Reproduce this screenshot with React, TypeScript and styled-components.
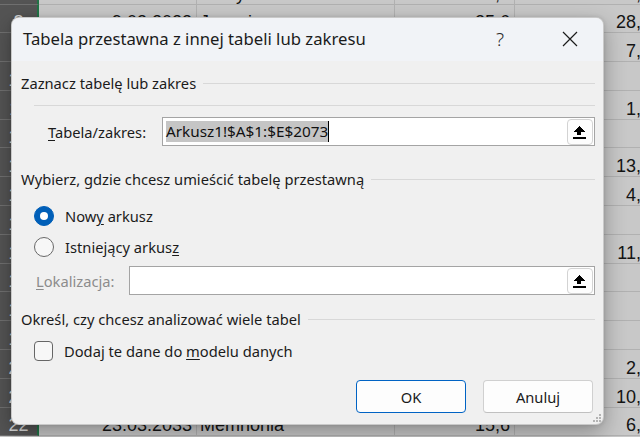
import React from "react";
import styled, { createGlobalStyle } from "styled-components";

const Global = createGlobalStyle`
  html, body { margin: 0; padding: 0; background: #c8c8c8; }
  body { font-family: "Noto Sans", "Liberation Sans", sans-serif; }
`;

const Page = styled.div`
  position: relative;
  width: 640px;
  height: 437px;
  overflow: hidden;
  background: #c8c8c8;
`;

/* ---------- spreadsheet behind the dialog ---------- */
const Sheet = styled.div`
  display: flex;
  flex-direction: column;
  width: 656px;
  margin-top: -24.3px;
`;

const SheetRow = styled.div`
  display: grid;
  grid-template-columns: 39px 158px 198px 120px 141px;
  height: 28.8px;
`;

const Cell = styled.div<{ $align?: "left" | "right" }>`
  box-sizing: border-box;
  display: flex;
  align-items: flex-end;
  justify-content: ${(p) => (p.$align === "left" ? "flex-start" : "flex-end")};
  padding: 0 ${(p) => (p.$align === "left" ? "0 0 3px" : "4px 0 0")};
  border-right: 1px solid #b1b1b1;
  border-bottom: 1px solid #b1b1b1;
  font-family: "Liberation Sans", Arial, sans-serif;
  font-size: 18px;
  line-height: 20px;
  color: #141414;
  white-space: nowrap;
  overflow: hidden;
`;

const HeadCell = styled.div`
  box-sizing: border-box;
  display: flex;
  align-items: flex-end;
  justify-content: center;
  background: #545454;
  border-right: 2px solid #217346;
  border-bottom: 1px solid #707070;
  font-family: "Liberation Sans", Arial, sans-serif;
  font-size: 18px;
  line-height: 20px;
  color: #d6d6d6;
`;

type RowData = { n: number; b?: string; c?: string; d?: string; e?: string };
const rows: RowData[] = [
  { n: 7, b: "8.03.2023", c: "Zefiryna", d: "12,1", e: "3,5" },
  { n: 8, b: "9.03.2023", c: "Jagusia", d: "25,6", e: "28,4" },
  { n: 9, b: "10.03.2023", c: "Klemens", d: "4,2", e: "7,1" },
  { n: 10, b: "11.03.2023", c: "Hortensja", d: "3,3" },
  { n: 11, b: "12.03.2023", c: "Bonifacy", d: "6,8", e: "1,9" },
  { n: 12, b: "13.03.2023", c: "Adelajda", d: "2,2" },
  { n: 13, b: "14.03.2023", c: "Gerwazy", d: "9,7", e: "13,2" },
  { n: 14, b: "15.03.2023", c: "Eulalia", d: "1,4", e: "4,6" },
  { n: 15, b: "16.03.2023", c: "Florian", d: "7,5" },
  { n: 16, b: "17.03.2023", c: "Kunegunda", d: "5,1", e: "11,3" },
  { n: 17, b: "18.03.2023", c: "Protazy", d: "8,8" },
  { n: 18, b: "19.03.2023", c: "Scholastyka", d: "2,9" },
  { n: 19, b: "20.03.2023", c: "Wincenty", d: "4,4" },
  { n: 20, b: "21.03.2023", c: "Tekla", d: "3,7", e: "2,8" },
  { n: 21, b: "22.03.2023", c: "Hipolit", d: "6,1", e: "10,5" },
  { n: 22, b: "23.03.2033", c: "Memnonia", d: "15,6", e: "6,2" },
];

/* ---------- dialog ---------- */
const Dialog = styled.div`
  position: absolute;
  left: 11px;
  top: 17px;
  width: 593px;
  height: 408px;
  box-sizing: border-box;
  display: flex;
  flex-direction: column;
  border: 1px solid rgba(0, 0, 0, 0.16);
  border-radius: 8px;
  overflow: hidden;
  background: #f0f0f0;
  box-shadow: 0 8px 22px rgba(0, 0, 0, 0.3), 0 0 4px rgba(0, 0, 0, 0.12);
  color: #1b1b1b;
`;

const TitleBar = styled.div`
  display: flex;
  align-items: center;
  height: 43px;
  flex-shrink: 0;
  padding: 0 10px 1px 11px;
  box-sizing: border-box;
  background: #f1f3f7;
`;

const Title = styled.div`
  flex: 1;
  font-size: 16.7px;
  line-height: 24px;
  white-space: nowrap;
`;

const TitleButton = styled.div<{ $ml?: number }>`
  width: 46px;
  height: 30px;
  margin-left: ${(p) => p.$ml ?? 0}px;
  display: flex;
  align-items: center;
  justify-content: center;
  font-size: 19px;
  font-weight: 300;
  color: #2a2a2a;
`;

const Body = styled.div`
  flex: 1;
  display: flex;
  flex-direction: column;
  padding: 0 8px 11px 9px;
  font-size: 14.7px;
  line-height: 20px;
`;

const GroupHeader = styled.div<{ $mt: number }>`
  display: flex;
  align-items: center;
  gap: 7px;
  height: 20px;
  margin-top: ${(p) => p.$mt}px;
  white-space: nowrap;
`;

const Rule = styled.div`
  flex: 1;
  height: 1px;
  background: #d8d8d8;
`;

const Separator = styled.div`
  height: 1px;
  margin: 12px 0 0 13px;
  background: #d8d8d8;
`;

const FieldRow = styled.div<{ $mt: number; $pl: number }>`
  display: flex;
  align-items: center;
  height: 29px;
  margin-top: ${(p) => p.$mt}px;
  padding-left: ${(p) => p.$pl}px;
`;

const FieldLabel = styled.div<{ $w: number; $disabled?: boolean }>`
  width: ${(p) => p.$w}px;
  flex-shrink: 0;
  white-space: nowrap;
  color: ${(p) => (p.$disabled ? "#8c8c8c" : "#1b1b1b")};
`;

const Key = styled.span`
  text-decoration: underline;
  text-underline-offset: 2px;
  text-decoration-thickness: 1px;
`;

const Input = styled.div`
  flex: 1;
  height: 29px;
  box-sizing: border-box;
  display: flex;
  align-items: center;
  padding: 0 1px 0 3px;
  background: #ffffff;
  border: 1px solid #a4a4a4;
`;

const Selected = styled.span`
  background: #c5c5c5;
  color: #111;
  font-size: 15.3px;
  line-height: 21px;
  white-space: nowrap;
`;

const Caret = styled.span`
  width: 1px;
  height: 21px;
  background: #000;
`;

const Spacer = styled.div`
  flex: 1;
`;

const PickButton = styled.div`
  width: 26px;
  height: 26px;
  box-sizing: border-box;
  border: 1px solid #d3d3d3;
  border-radius: 4px;
  background: #fdfdfd;
  display: flex;
  align-items: center;
  justify-content: center;
`;

const OptionRow = styled.div<{ $mt: number }>`
  display: flex;
  align-items: center;
  gap: 11px;
  height: 20px;
  margin-top: ${(p) => p.$mt}px;
  padding-left: 13px;
  white-space: nowrap;
`;

const Radio = styled.div<{ $checked?: boolean }>`
  width: 20px;
  height: 20px;
  box-sizing: border-box;
  border-radius: 50%;
  flex-shrink: 0;
  display: flex;
  align-items: center;
  justify-content: center;
  background: ${(p) => (p.$checked ? "#005fb8" : "#f7f7f7")};
  border: 1px solid ${(p) => (p.$checked ? "#005fb8" : "#686868")};
  &::after {
    content: "";
    display: ${(p) => (p.$checked ? "block" : "none")};
    width: 8px;
    height: 8px;
    border-radius: 50%;
    background: #ffffff;
  }
`;

const Check = styled.div`
  width: 19px;
  height: 20px;
  box-sizing: border-box;
  flex-shrink: 0;
  border: 1px solid #666666;
  border-radius: 4px;
  background: #f7f7f7;
`;

const ButtonRow = styled.div`
  display: flex;
  justify-content: flex-end;
  gap: 17px;
  margin-top: 19px;
  padding-right: 2px;
`;

const Button = styled.div<{ $primary?: boolean }>`
  width: 110px;
  height: 33px;
  box-sizing: border-box;
  display: flex;
  align-items: center;
  justify-content: center;
  border-radius: 4px;
  background: #fdfdfd;
  border: 1px solid ${(p) => (p.$primary ? "#0063c4" : "#d0d0d0")};
  border-bottom-color: ${(p) => (p.$primary ? "#0063c4" : "#c0c0c0")};
  font-size: 14.7px;
`;

const Grip = styled.svg`
  position: absolute;
  right: 2px;
  bottom: 2px;
`;

const UpArrow = () => (
  <svg width="14" height="14" viewBox="0 0 14 14" shapeRendering="crispEdges">
    <path d="M6 1 L12 7 L0 7 Z" fill="#000" />
    <rect x="4" y="7" width="4" height="3" fill="#000" />
    <rect x="0" y="12" width="13" height="1.5" fill="#000" />
  </svg>
);

const CloseIcon = () => (
  <svg width="16" height="16" viewBox="0 0 16 16">
    <path d="M1 1 L15 15 M15 1 L1 15" stroke="#1b1b1b" strokeWidth="1.2" fill="none" />
  </svg>
);

export default function App() {
  return (
    <Page>
      <Global />
      <Sheet>
        {rows.map((r) => (
          <SheetRow key={r.n}>
            <HeadCell>{r.n}</HeadCell>
            <Cell>{r.b}</Cell>
            <Cell $align="left">{r.c}</Cell>
            <Cell>{r.d}</Cell>
            <Cell>{r.e}</Cell>
          </SheetRow>
        ))}
      </Sheet>

      <Dialog>
        <TitleBar>
          <Title>Tabela przestawna z innej tabeli lub zakresu</Title>
          <TitleButton>?</TitleButton>
          <TitleButton $ml={24}>
            <CloseIcon />
          </TitleButton>
        </TitleBar>

        <Body>
          <GroupHeader $mt={12}>
            Zaznacz tabelę lub zakres
            <Rule />
          </GroupHeader>
          <Separator />

          <FieldRow $mt={11} $pl={27}>
            <FieldLabel $w={114}>
              <Key>T</Key>abela/zakres:
            </FieldLabel>
            <Input>
              <Selected>Arkusz1!$A$1:$E$2073</Selected>
              <Caret />
              <Spacer />
              <PickButton>
                <UpArrow />
              </PickButton>
            </Input>
          </FieldRow>

          <GroupHeader $mt={23}>
            Wybierz, gdzie chcesz umieścić tabelę przestawną
            <Rule />
          </GroupHeader>

          <OptionRow $mt={17}>
            <Radio $checked />
            <span>
              Now<Key>y</Key> arkusz
            </span>
          </OptionRow>
          <OptionRow $mt={11}>
            <Radio />
            <span>
              Istniejący arkus<Key>z</Key>
            </span>
          </OptionRow>

          <FieldRow $mt={9} $pl={15}>
            <FieldLabel $w={93} $disabled>
              <Key>L</Key>okalizacja:
            </FieldLabel>
            <Input>
              <Spacer />
              <PickButton>
                <UpArrow />
              </PickButton>
            </Input>
          </FieldRow>

          <GroupHeader $mt={14}>
            Określ, czy chcesz analizować wiele tabel
            <Rule />
          </GroupHeader>

          <OptionRow $mt={12}>
            <Check />
            <span>
              Dodaj te dane do <Key>m</Key>odelu danych
            </span>
          </OptionRow>

          <ButtonRow>
            <Button $primary>OK</Button>
            <Button>Anuluj</Button>
          </ButtonRow>
        </Body>

        <Grip width="9" height="9" viewBox="0 0 9 9">
          <g fill="#b4b4b4">
            <rect x="7" y="1" width="2" height="2" />
            <rect x="4" y="4" width="2" height="2" />
            <rect x="7" y="4" width="2" height="2" />
            <rect x="1" y="7" width="2" height="2" />
            <rect x="4" y="7" width="2" height="2" />
            <rect x="7" y="7" width="2" height="2" />
          </g>
        </Grip>
      </Dialog>
    </Page>
  );
}
